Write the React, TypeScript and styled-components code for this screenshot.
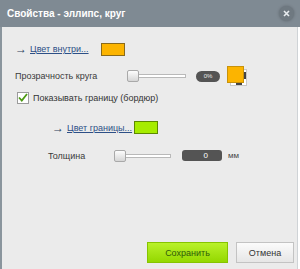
import styled, { createGlobalStyle } from "styled-components";

const GlobalStyle = createGlobalStyle`
  html, body {
    margin: 0;
    padding: 0;
    background: #ffffff;
  }
  body {
    font-family: "Liberation Sans", Arial, sans-serif;
    font-size: 9px;
    color: #333333;
  }
`;

const StyledWindow = styled.div`
  width: 300px;
  height: 269px;
  display: flex;
  flex-direction: column;
  overflow: hidden;
`;
const StyledHeader = styled.div`
  height: 27px;
  flex-shrink: 0;
  background: #7f8a93;
  display: flex;
  align-items: center;
  justify-content: space-between;
  padding: 0 6px 0 7px;
`;
const StyledTitle = styled.div`
  color: #ffffff;
  font-weight: bold;
  font-size: 10px;
`;
const StyledClose = styled.button`
  width: 15px;
  height: 15px;
  border-radius: 50%;
  border: none;
  padding: 0;
  background: #6f7981;
  box-shadow: 0 0 3px rgba(0, 0, 0, 0.25);
  display: flex;
  align-items: center;
  justify-content: center;
  cursor: pointer;
`;
const StyledBody = styled.div`
  flex: 1;
  display: flex;
  flex-direction: column;
  background: #ebebeb;
  border-left: 2px solid #8a959d;
  border-right: 1px solid #cfd3d6;
  margin-right: 2px;
  padding: 15px 0 6px 0;
`;
const StyledRow = styled.div<{ $top: number; $left: number; $height: number }>`
  display: flex;
  align-items: center;
  white-space: nowrap;
  height: ${(p) => p.$height}px;
  margin-top: ${(p) => p.$top}px;
  padding-left: ${(p) => p.$left}px;
`;
const StyledLink = styled.a`
  color: #2d4f86;
  text-decoration: underline;
  cursor: pointer;
`;
const StyledArrow = styled.span`
  color: #2d3f5c;
  font-size: 12px;
  line-height: 12px;
  margin-right: 3px;
`;
const StyledLinkBox = styled.div<{ $width: number }>`
  width: ${(p) => p.$width}px;
  flex-shrink: 0;
  display: flex;
  align-items: center;
`;
const StyledSwatch = styled.div<{ $color: string; $border: string }>`
  width: 22px;
  height: 11px;
  background: ${(p) => p.$color};
  border: 1px solid ${(p) => p.$border};
`;
const StyledLabel = styled.div<{ $width: number }>`
  width: ${(p) => p.$width}px;
  flex-shrink: 0;
  color: #3a3a3a;
`;
const StyledSlider = styled.div<{ $width: number }>`
  width: ${(p) => p.$width}px;
  display: flex;
  align-items: center;
`;
const StyledHandle = styled.div`
  width: 10px;
  height: 10px;
  flex-shrink: 0;
  border: 1px solid #a9a9a9;
  border-radius: 2px;
  background: linear-gradient(#fdfdfd, #d6d6d6);
`;
const StyledTrack = styled.div`
  flex: 1;
  height: 2px;
  background: #ffffff;
  border: 1px solid #b9b9b9;
  border-left: none;
`;
const StyledPill = styled.div`
  width: 24px;
  height: 11px;
  margin-left: 10px;
  border-radius: 6px;
  background: #545454;
  color: #e8e8e8;
  font-size: 6px;
  display: flex;
  align-items: center;
  justify-content: center;
`;
const StyledPicker = styled.svg`
  margin-left: 7px;
`;
const StyledCheckbox = styled.div`
  width: 10px;
  height: 10px;
  border: 1px solid #9c9c9c;
  background: #ffffff;
  display: flex;
  align-items: center;
  justify-content: center;
  margin-right: 4px;
`;
const StyledValue = styled.div`
  width: 40px;
  height: 11px;
  margin-left: 11px;
  border-radius: 3px;
  background: #545454;
  color: #ffffff;
  font-size: 8px;
  display: flex;
  align-items: center;
  justify-content: flex-end;
  padding-right: 14px;
  box-sizing: border-box;
`;
const StyledUnit = styled.span`
  margin-left: 6px;
  font-size: 8px;
  color: #444444;
`;
const StyledFooter = styled.div`
  margin-top: auto;
  display: flex;
  justify-content: flex-end;
  gap: 8px;
  padding-right: 3px;
`;
const StyledButton = styled.button<{ $primary?: boolean }>`
  height: 21px;
  width: ${(p) => (p.$primary ? 81 : 58)}px;
  font-family: "Liberation Sans", Arial, sans-serif;
  font-size: 9px;
  cursor: pointer;
  padding: 0;
  border: 1px solid ${(p) => (p.$primary ? "#86c400" : "#c3c3c3")};
  background: ${(p) =>
    p.$primary
      ? "linear-gradient(#b9f12a, #94d800)"
      : "linear-gradient(#fbfbfb, #e6e6e6)"};
  color: ${(p) => (p.$primary ? "#2f5b0a" : "#333333")};
`;

export default function App() {
  return (
    <>
      <GlobalStyle />
      <StyledWindow>
        <StyledHeader>
          <StyledTitle>Свойства - эллипс, круг</StyledTitle>
          <StyledClose>
            <svg width="7" height="7" viewBox="0 0 7 7">
              <path d="M1 1L6 6M6 1L1 6" stroke="#e8ecef" strokeWidth="1.6" />
            </svg>
          </StyledClose>
        </StyledHeader>
        <StyledBody>
          <StyledRow $top={0} $left={13} $height={14}>
            <StyledLinkBox $width={86}>
              <StyledArrow>→</StyledArrow>
              <StyledLink>Цвет внутри...</StyledLink>
            </StyledLinkBox>
            <StyledSwatch $color="#fcb400" $border="#8a6a1a" />
          </StyledRow>
          <StyledRow $top={11} $left={13} $height={18}>
            <StyledLabel $width={112}>Прозрачность круга</StyledLabel>
            <StyledSlider $width={59}>
              <StyledHandle />
              <StyledTrack />
            </StyledSlider>
            <StyledPill>0%</StyledPill>
            <StyledPicker width="21" height="21" viewBox="0 0 21 21">
              <rect x="3.5" y="3.5" width="16" height="16" fill="#ffffff" stroke="#c8c8c8" />
              <rect x="0.5" y="0.5" width="16" height="16" fill="#fcb400" stroke="#c8920a" />
              <rect x="17" y="6" width="2" height="7" fill="#444444" />
              <rect x="9" y="17" width="6" height="2" fill="#444444" />
            </StyledPicker>
          </StyledRow>
          <StyledRow $top={6} $left={15} $height={13}>
            <StyledCheckbox>
              <svg width="10" height="9" viewBox="0 0 10 9">
                <path d="M1 4.5L3.8 7.5L9 1" fill="none" stroke="#4c9a12" strokeWidth="1.8" />
              </svg>
            </StyledCheckbox>
            <span>Показывать границу (бордюр)</span>
          </StyledRow>
          <StyledRow $top={17} $left={50} $height={13}>
            <StyledLinkBox $width={82}>
              <StyledArrow>→</StyledArrow>
              <StyledLink>Цвет границы...</StyledLink>
            </StyledLinkBox>
            <StyledSwatch $color="#a6ec00" $border="#5d8a00" />
          </StyledRow>
          <StyledRow $top={15} $left={46} $height={13}>
            <StyledLabel $width={66}>Толщина</StyledLabel>
            <StyledSlider $width={57}>
              <StyledHandle />
              <StyledTrack />
            </StyledSlider>
            <StyledValue>0</StyledValue>
            <StyledUnit>мм</StyledUnit>
          </StyledRow>
          <StyledFooter>
            <StyledButton $primary>Сохранить</StyledButton>
            <StyledButton>Отмена</StyledButton>
          </StyledFooter>
        </StyledBody>
      </StyledWindow>
    </>
  );
}
